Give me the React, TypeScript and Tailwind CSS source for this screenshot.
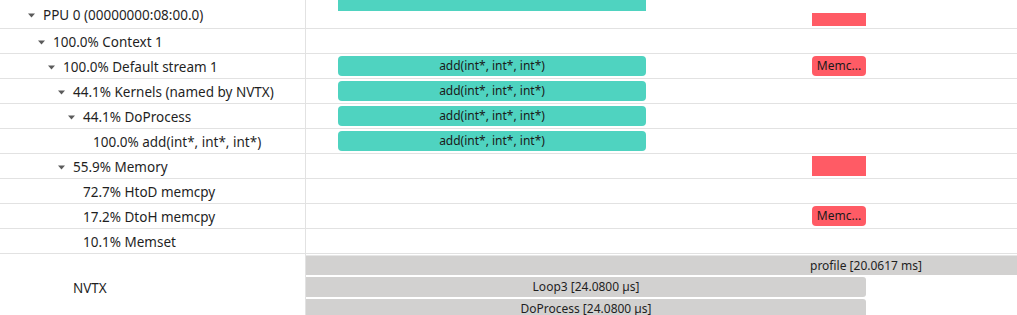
import React from "react";

type Bar = { left: number; width: number; top: number; height: number; color: string; label?: string; rounded?: boolean };

interface Row {
  depth: number;
  label: string;
  caret: boolean;
  height: number;
  bars: Bar[];
}

const TEAL = "teal";
const RED = "red";

const kernel = (): Bar => ({ left: 32, width: 308, top: 2, height: 20, color: TEAL, label: "add(int*, int*, int*)", rounded: true });
const memc = (): Bar => ({ left: 506, width: 54, top: 2, height: 20, color: RED, label: "Memc...", rounded: true });

const rows: Row[] = [
  {
    depth: 0,
    label: "PPU 0 (00000000:08:00.0)",
    caret: true,
    height: 28,
    bars: [
      { left: 32, width: 308, top: 0, height: 11, color: TEAL },
      { left: 506, width: 54, top: 13, height: 13, color: RED },
    ],
  },
  { depth: 1, label: "100.0% Context 1", caret: true, height: 24, bars: [] },
  { depth: 2, label: "100.0% Default stream 1", caret: true, height: 24, bars: [kernel(), memc()] },
  { depth: 3, label: "44.1% Kernels (named by NVTX)", caret: true, height: 24, bars: [kernel()] },
  { depth: 4, label: "44.1% DoProcess", caret: true, height: 24, bars: [kernel()] },
  { depth: 5, label: "100.0% add(int*, int*, int*)", caret: false, height: 24, bars: [kernel()] },
  {
    depth: 3,
    label: "55.9% Memory",
    caret: true,
    height: 24,
    bars: [{ left: 506, width: 54, top: 2, height: 20, color: RED }],
  },
  { depth: 4, label: "72.7% HtoD memcpy", caret: false, height: 24, bars: [] },
  { depth: 4, label: "17.2% DtoH memcpy", caret: false, height: 24, bars: [memc()] },
  { depth: 4, label: "10.1% Memset", caret: false, height: 24, bars: [] },
];

const Caret = () => (
  <svg width="7" height="5" viewBox="0 0 7 5" className="shrink-0">
    <path d="M0 0.5 L7 0.5 L3.5 4.5 Z" fill="#5a5a5a" />
  </svg>
);

const App = () => {
  return (
    <div className="w-[1017px] h-[315px] overflow-hidden bg-white text-[#1f1f1f] font-['Noto_Sans','Open_Sans',sans-serif]">
      {rows.map((row, i) => (
        <div key={i} className="flex border-b border-[#e2e2e2]" style={{ height: row.height + 1 }}>
          <div className="w-[306px] shrink-0 border-r border-[#e2e2e2] flex items-center pt-[3px] text-[13.5px]">
            <div className="flex items-center" style={{ paddingLeft: 28 + row.depth * 10 }}>
              {row.caret ? <Caret /> : <span className="w-[7px]" />}
              <span className="ml-[8px] leading-none">{row.label}</span>
            </div>
          </div>
          <div className="relative flex-1">
            {row.bars.map((bar, j) => (
              <div
                key={j}
                className={`absolute flex items-center justify-center overflow-hidden whitespace-nowrap text-[12px] leading-none text-[#1a1a1a] ${
                  bar.color === TEAL ? "bg-[#4fd3c0]" : "bg-[#ff5b65]"
                } ${bar.rounded ? "rounded-[4px]" : ""}`}
                style={{ left: bar.left, width: bar.width, top: bar.top, height: bar.height }}
              >
                {bar.label}
              </div>
            ))}
          </div>
        </div>
      ))}

      {/* NVTX section */}
      <div className="flex h-[62px]">
        <div className="w-[306px] shrink-0 border-r border-[#e2e2e2] pl-[73px] pt-[28px] text-[13.5px] leading-none">
          NVTX
        </div>
        <div className="flex-1 flex flex-col gap-[2px] pt-[1px] overflow-hidden text-[12px]">
          <div className="w-[1120px] h-[20px] shrink-0 bg-[#d2d1d0] border-t border-[#e6e6e6] flex items-center justify-center">
            profile [20.0617 ms]
          </div>
          <div className="w-[560px] h-[20px] shrink-0 bg-[#d2d1d0] rounded-r-[3px] flex items-center justify-center">
            Loop3 [24.0800 µs]
          </div>
          <div className="w-[560px] h-[20px] shrink-0 bg-[#d2d1d0] rounded-r-[3px] flex items-center justify-center">
            DoProcess [24.0800 µs]
          </div>
        </div>
      </div>
    </div>
  );
};

export default App;
